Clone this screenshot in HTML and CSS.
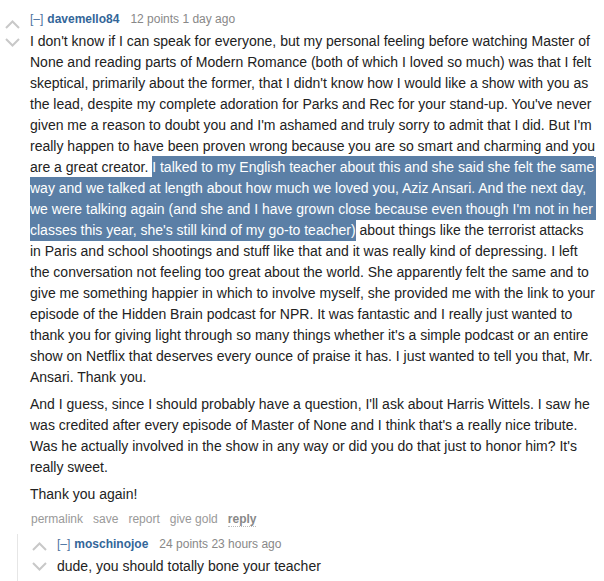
FILE: index.html
```html
<!DOCTYPE html>
<html lang="en">
<head>
<meta charset="utf-8">
<title>Comment thread</title>
<link rel="stylesheet" href="styles.css">
</head>
<body>
<div class="thread">
  <div class="comment">
    <div class="votes">
      <svg class="arrow" width="15" height="9" viewBox="0 0 15 9"><polyline points="1,8 7.5,1.5 14,8"/></svg>
      <svg class="arrow" width="15" height="9" viewBox="0 0 15 9"><polyline points="1,1 7.5,7.5 14,1"/></svg>
    </div>
    <div class="entry">
      <p class="tagline"><a class="expand">[–]</a><a class="author">davemello84</a><span class="score">12 points 1 day ago</span></p>
      <div class="md">
        <p class="first">I don't know if I can speak for everyone, but my personal feeling before watching Master of None and reading parts of Modern Romance (both of which I loved so much) was that I felt skeptical, primarily about the former, that I didn't know how I would like a show with you as the lead, despite my complete adoration for Parks and Rec for your stand-up. You've never given me a reason to doubt you and I'm ashamed and truly sorry to admit that I did. But I'm really happen to have been proven wrong because you are so smart and charming and you are a great creator. <span class="hl">I talked to my English teacher about this and she said she felt the same way and we talked at length about how much we loved you, Aziz Ansari. And the next day, we were talking again (and she and I have grown close because even though I'm not in her classes this year, she's still kind of my go-to teacher)</span> about things like the terrorist attacks in Paris and school shootings and stuff like that and it was really kind of depressing. I left the conversation not feeling too great about the world. She apparently felt the same and to give me something happier in which to involve myself, she provided me with the link to your episode of the Hidden Brain podcast for NPR. It was fantastic and I really just wanted to thank you for giving light through so many things whether it's a simple podcast or an entire show on Netflix that deserves every ounce of praise it has. I just wanted to tell you that, Mr. Ansari. Thank you.</p>
        <p>And I guess, since I should probably have a question, I'll ask about Harris Wittels. I saw he was credited after every episode of Master of None and I think that's a really nice tribute. Was he actually involved in the show in any way or did you do that just to honor him? It's really sweet.</p>
        <p>Thank you again!</p>
      </div>
      <ul class="buttons">
        <li><a>permalink</a></li>
        <li><a>save</a></li>
        <li><a>report</a></li>
        <li><a>give gold</a></li>
        <li><a class="reply">reply</a></li>
      </ul>
    </div>
  </div>
  <div class="child">
    <div class="comment nested">
      <div class="votes">
        <svg class="arrow" width="15" height="9" viewBox="0 0 15 9"><polyline points="1,8 7.5,1.5 14,8"/></svg>
        <svg class="arrow" width="15" height="9" viewBox="0 0 15 9"><polyline points="1,1 7.5,7.5 14,1"/></svg>
      </div>
      <div class="entry">
        <p class="tagline"><a class="expand">[–]</a><a class="author">moschinojoe</a><span class="score">24 points 23 hours ago</span></p>
        <div class="md">
          <p>dude, you should totally bone your teacher</p>
        </div>
      </div>
    </div>
  </div>
</div>
</body>
</html>
```

FILE: styles.css
```css
html, body {
  margin: 0;
  padding: 0;
  background: #ffffff;
  overflow: hidden;
}

body {
  font-family: "Liberation Sans", Arial, Helvetica, sans-serif;
  color: #222222;
}

.thread {
  padding: 11px 8px 0 5px;
}

.comment {
  display: flex;
  align-items: flex-start;
}

.votes {
  flex: none;
  width: 15px;
  margin-right: 10px;
  padding-top: 9px;
  display: flex;
  flex-direction: column;
  gap: 9px;
}

.arrow {
  display: block;
}

.arrow polyline {
  fill: none;
  stroke: #c8c8c8;
  stroke-width: 2;
}

.entry {
  flex: 1;
  min-width: 0;
}

.tagline {
  margin: 0 0 4px;
  font-size: 12px;
  line-height: 16px;
  color: #888888;
  white-space: nowrap;
}

.expand {
  color: #4a72a0;
  margin-right: 4px;
}

.author {
  color: #336699;
  font-weight: bold;
  margin-right: 11px;
}

.md {
  font-size: 14px;
  line-height: 21px;
}

.md p {
  margin: 0 0 6px;
}

.md p.first {
  background: linear-gradient(#5b7fa6, #5b7fa6) right 0 top 126px / 12px 63px no-repeat;
}

.hl {
  background: #5b7fa6;
  color: #ffffff;
  padding: 3px 0;
}

.buttons {
  list-style: none;
  margin: 0;
  padding: 0 0 0 1px;
  display: flex;
  gap: 10px;
  font-size: 12px;
  line-height: 16px;
}

.buttons a {
  color: #999999;
}

.buttons .reply {
  color: #888888;
  font-weight: bold;
  border-bottom: 1px dotted #bbbbbb;
}

.child {
  margin: 7px 0 0 12px;
  border-left: 1px solid #e6e6e6;
  padding: 2px 0 20px 14px;
}

.nested .votes {
  padding-top: 6px;
  gap: 11px;
}
```
